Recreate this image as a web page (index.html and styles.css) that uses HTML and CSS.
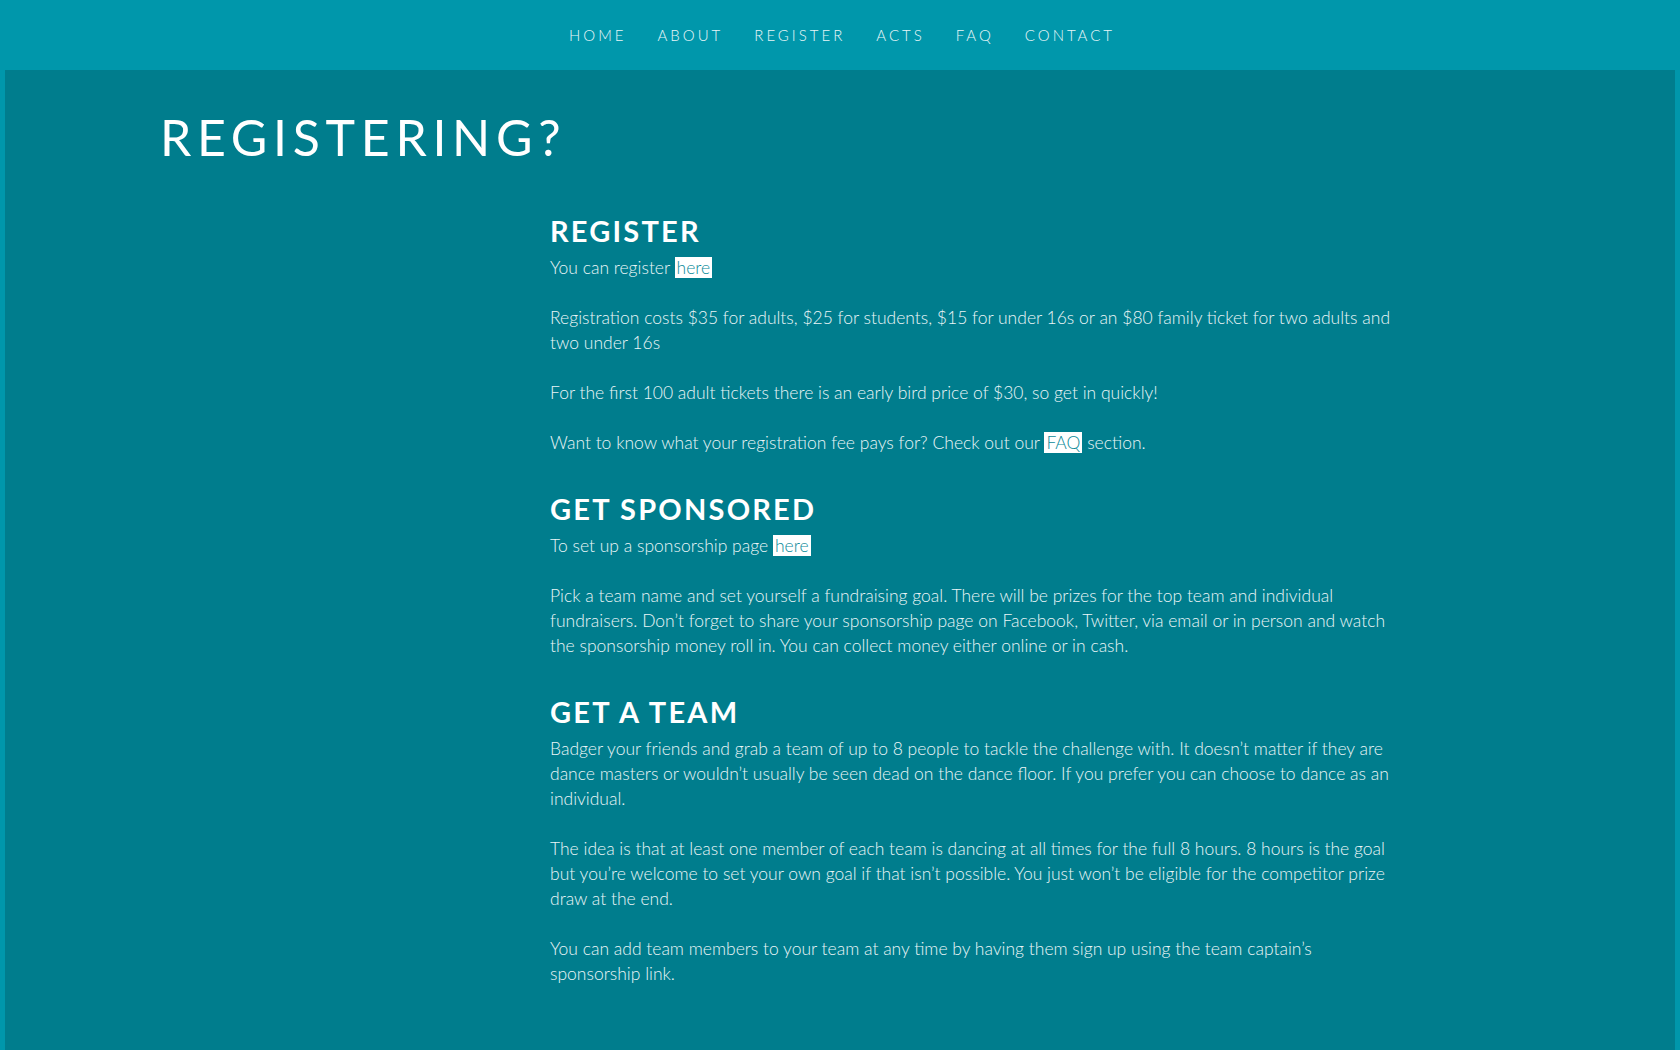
FILE: index.html
```html
<!DOCTYPE html>
<html lang="en">
<head>
<meta charset="utf-8">
<title>Registering?</title>
<link rel="stylesheet" href="styles.css">
</head>
<body>
<header class="topbar">
  <nav class="nav">
    <a class="nav-link" href="#">HOME</a>
    <a class="nav-link" href="#">ABOUT</a>
    <a class="nav-link" href="#">REGISTER</a>
    <a class="nav-link" href="#">ACTS</a>
    <a class="nav-link" href="#">FAQ</a>
    <a class="nav-link" href="#">CONTACT</a>
  </nav>
</header>
<main class="page">
  <h1 class="page-title">REGISTERING?</h1>
  <div class="content">
    <section class="block">
      <h2 class="block-title">REGISTER</h2>
      <p>You can register <a class="hl" href="#">here</a></p>
      <p>Registration costs $35 for adults, $25 for students, $15 for under 16s or an $80 family ticket for two adults and two under 16s</p>
      <p>For the first 100 adult tickets there is an early bird price of $30, so get in quickly!</p>
      <p>Want to know what your registration fee pays for? Check out our <a class="hl" href="#">FAQ</a> section.</p>
    </section>
    <section class="block">
      <h2 class="block-title">GET SPONSORED</h2>
      <p>To set up a sponsorship page <a class="hl" href="#">here</a></p>
      <p>Pick a team name and set yourself a fundraising goal. There will be prizes for the top team and individual fundraisers. Don’t forget to share your sponsorship page on Facebook, Twitter, via email or in person and watch the sponsorship money roll in. You can collect money either online or in cash.</p>
    </section>
    <section class="block">
      <h2 class="block-title">GET A TEAM</h2>
      <p>Badger your friends and grab a team of up to 8 people to tackle the challenge with. It doesn’t matter if they are dance masters or wouldn’t usually be seen dead on the dance floor. If you prefer you can choose to dance as an individual.</p>
      <p>The idea is that at least one member of each team is dancing at all times for the full 8 hours. 8 hours is the goal but you’re welcome to set your own goal if that isn’t possible. You just won’t be eligible for the competitor prize draw at the end.</p>
      <p>You can add team members to your team at any time by having them sign up using the team captain’s sponsorship link.</p>
    </section>
  </div>
</main>
</body>
</html>
```

FILE: styles.css
```css
html, body {
  margin: 0;
  padding: 0;
}
body {
  background: #0097ab;
  font-family: "Lato", "Open Sans", sans-serif;
  font-weight: 300;
  color: #eaf5f7;
  min-height: 1050px;
  display: flex;
  flex-direction: column;
}
.topbar {
  height: 70px;
  display: flex;
  align-items: center;
  justify-content: center;
}
.nav {
  display: flex;
  gap: 31px;
  padding-left: 4px;
}
.nav-link {
  color: #e8f6f8;
  text-decoration: none;
  font-size: 15px;
  font-weight: 300;
  letter-spacing: 3px;
}
.page {
  flex: 1;
  margin: 0 5px;
  background: #007d8d;
  padding: 37px 0 60px 155px;
}
.page-title {
  margin: 0;
  font-size: 50px;
  font-weight: 400;
  letter-spacing: 5.7px;
  color: #ffffff;
  line-height: 60px;
}
.content {
  margin-left: 390px;
  width: 845px;
  padding-top: 46px;
}
.block {
  margin-bottom: 36px;
}
.block-title {
  margin: 0 0 6px 0;
  font-size: 29px;
  font-weight: 700;
  letter-spacing: 2.2px;
  color: #ffffff;
  line-height: 36px;
}
.block p {
  margin: 0 0 25px 0;
  font-size: 17.5px;
  line-height: 25px;
}
.block p:last-child {
  margin-bottom: 0;
}
.hl {
  background: #ffffff;
  color: #0a8a99;
  text-decoration: none;
  padding: 0 2px;
}
```
